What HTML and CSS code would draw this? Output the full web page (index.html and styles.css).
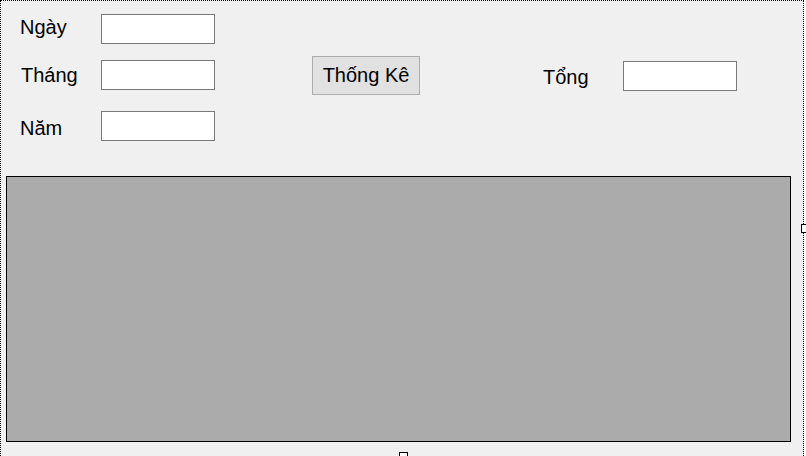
FILE: index.html
```html
<!DOCTYPE html>
<html lang="vi">
<head>
<meta charset="utf-8">
<title>Thống Kê</title>
<link rel="stylesheet" href="styles.css">
</head>
<body>
<div class="form">
  <div class="top">
    <div class="fields">
      <div class="row row-ngay">
        <span class="label label-ngay">Ngày</span>
        <input class="box" type="text">
      </div>
      <div class="row row-thang">
        <span class="label label-thang">Tháng</span>
        <input class="box" type="text">
      </div>
      <div class="row row-nam">
        <span class="label label-nam">Năm</span>
        <input class="box" type="text">
      </div>
    </div>
    <button class="btn" type="button">Thống Kê</button>
    <div class="total">
      <span class="label label-tong">Tổng</span>
      <input class="box" type="text">
    </div>
  </div>
  <div class="grid"></div>
  <div class="handle handle-right"></div>
  <div class="handle handle-bottom"></div>
</div>
</body>
</html>
```

FILE: styles.css
```css
html, body {
  margin: 0;
  padding: 0;
  background: #ffffff;
  overflow: hidden;
}

.form {
  position: relative;
  box-sizing: border-box;
  width: 804px;
  height: 470px;
  background: #f0f0f0;
  border: 1px dotted #000000;
  border-bottom: none;
  font-family: "Liberation Sans", Arial, sans-serif;
  font-size: 20px;
  color: #000000;
}

.top {
  box-sizing: border-box;
  height: 175px;
  padding: 13px 0 0 19px;
  display: flex;
  align-items: flex-start;
}

.fields {
  display: flex;
  flex-direction: column;
}

.row {
  display: flex;
  align-items: flex-start;
  height: 30px;
}

.row-thang { margin-top: 16px; }
.row-nam { margin-top: 21px; }

.label {
  display: block;
  width: 81px;
  line-height: 30px;
  white-space: nowrap;
}

.label-ngay { margin-top: -2px; }
.label-thang { padding-left: 1px; width: 80px; }
.label-nam { margin-top: 2px; }

.box {
  display: block;
  box-sizing: border-box;
  width: 114px;
  height: 30px;
  margin: 0;
  padding: 0;
  border: 1px solid #7a7a7a;
  background: #ffffff;
  outline: none;
}

.btn {
  box-sizing: border-box;
  width: 108px;
  height: 39px;
  margin: 42px 0 0 97px;
  padding: 0;
  border: 1px solid #adadad;
  background: #e1e1e1;
  font-family: "Liberation Sans", Arial, sans-serif;
  font-size: 20px;
  line-height: 37px;
  color: #000000;
  text-align: center;
}

.total {
  display: flex;
  align-items: flex-start;
  margin: 47px 0 0 123px;
}

.label-tong {
  width: 80px;
  margin-top: 1px;
}

.grid {
  box-sizing: border-box;
  width: 785px;
  height: 266px;
  margin-left: 5px;
  background: #ababab;
  border: 1px solid #000000;
}

.handle {
  position: absolute;
  box-sizing: border-box;
  width: 9px;
  height: 9px;
  background: #ffffff;
  border: 1px solid #000000;
}

.handle-right {
  left: 800px;
  top: 223px;
}

.handle-bottom {
  left: 398px;
  top: 451px;
}
```
